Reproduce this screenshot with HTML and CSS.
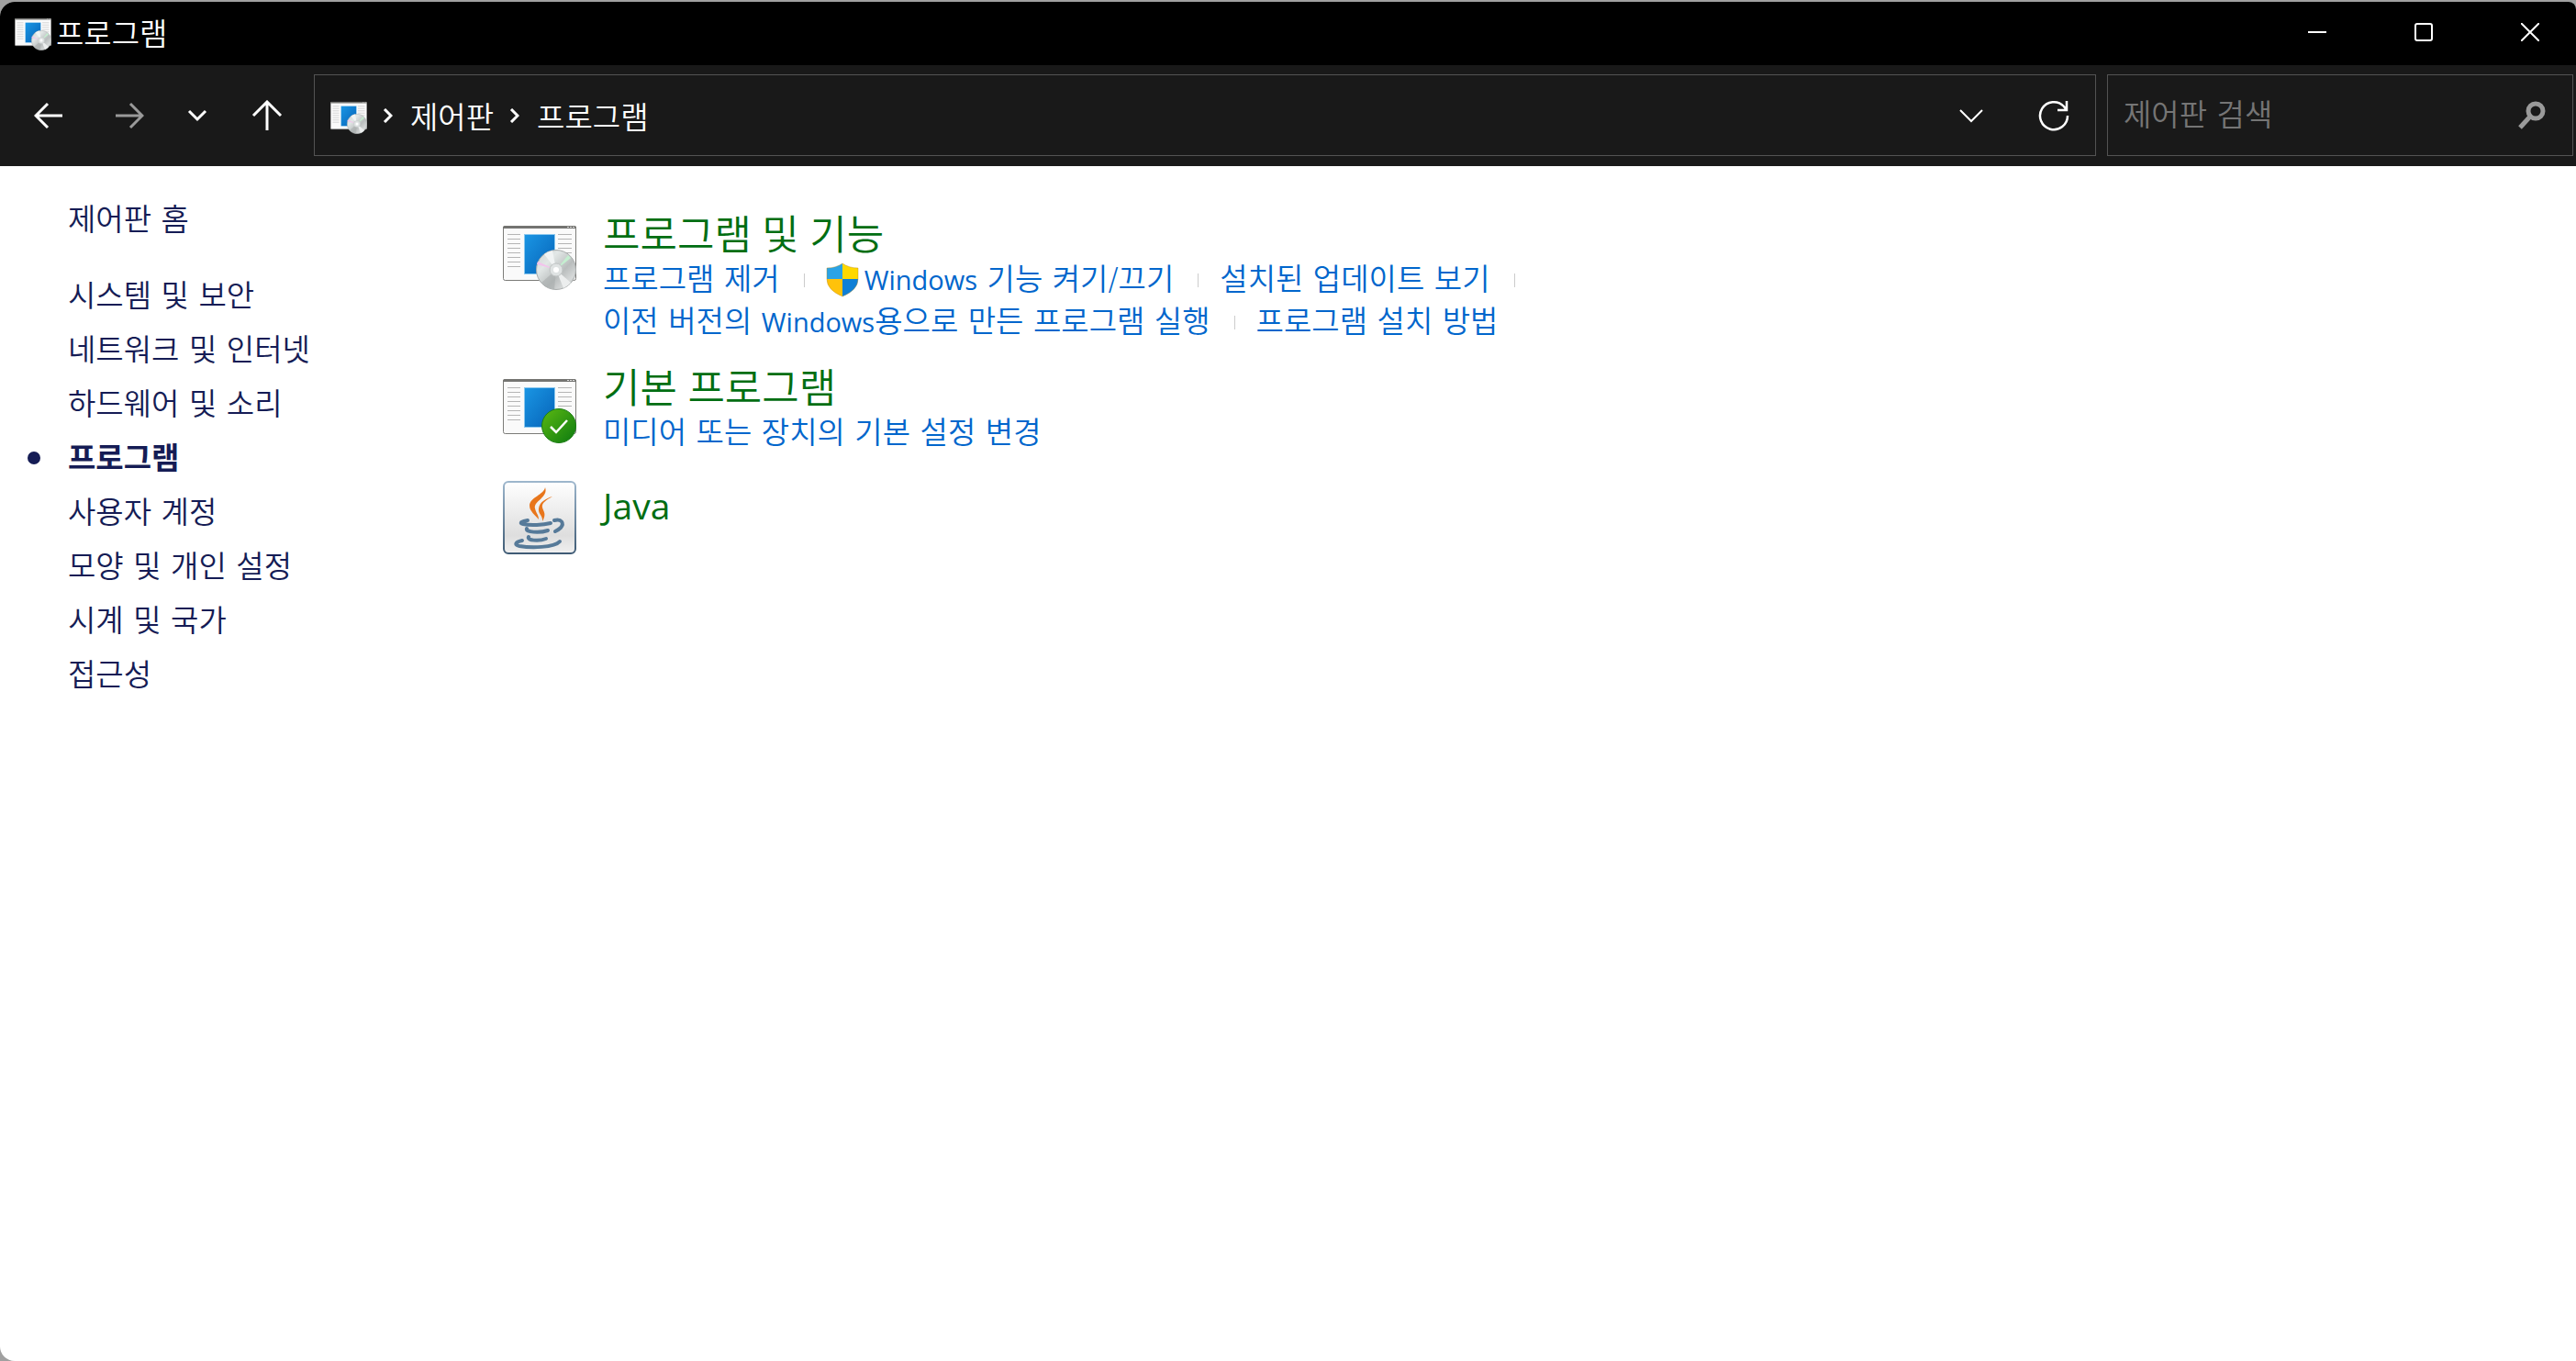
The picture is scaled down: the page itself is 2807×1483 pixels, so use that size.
FILE: index.html
```html
<!DOCTYPE html>
<html lang="ko">
<head>
  <meta charset="UTF-8">
  <meta name="viewport" content="width=device-width, initial-scale=1.0">
  <title>프로그램</title>
  <link rel="stylesheet" href="styles.css">
</head>
<body>
  <!-- shared icon parts -->
  <svg class="defs" width="0" height="0" aria-hidden="true">
    <defs>
      <linearGradient id="blue" x1="0" y1="0" x2="1" y2="1">
        <stop offset="0" stop-color="#1a96e4"/>
        <stop offset="1" stop-color="#0663b8"/>
      </linearGradient>
      <linearGradient id="green" x1="0" y1="0" x2="1" y2="1">
        <stop offset="0" stop-color="#5cb912"/>
        <stop offset="1" stop-color="#0c7a10"/>
      </linearGradient>
      <linearGradient id="silver" x1="0" y1="0" x2="1" y2="1">
        <stop offset="0" stop-color="#cfd4d4"/>
        <stop offset="0.3" stop-color="#e2e7e6"/>
        <stop offset="0.6" stop-color="#b9bdbd"/>
        <stop offset="0.8" stop-color="#d6d9d9"/>
        <stop offset="1" stop-color="#a4a8a8"/>
      </linearGradient>
      <linearGradient id="tile" x1="0" y1="0" x2="0" y2="1">
        <stop offset="0" stop-color="#ffffff"/>
        <stop offset="0.75" stop-color="#dedede"/>
        <stop offset="1" stop-color="#f0f0f0"/>
      </linearGradient>
      <linearGradient id="tile-edge" x1="0" y1="0" x2="0" y2="1">
        <stop offset="0" stop-color="#9db6cc"/>
        <stop offset="1" stop-color="#3f5b75"/>
      </linearGradient>
      <symbol id="window" viewBox="0 0 80 80">
        <rect x="0.5" y="10.5" width="79" height="59" rx="2" fill="#fafafa" stroke="#7b7b78"/>
        <path d="M0 13V12q0-2 2-2h76q2 0 2 2v1z" fill="#747471"/>
        <path d="M70 11.5h2m1 0h2m1 0h2" stroke="#ddd"/>
        <path d="M5 19.500h14M5 24.500h14M5 29.500h14M5 34.500h14M5 39.500h14M5 44.500h14M5 49.500h14M5 54.500h14M60 19.500h15M60 24.500h15M60 29.500h15M60 34.500h15M60 39.500h15" stroke="#b5b5b5"/>
        <rect x="23.500" y="19.500" width="33" height="43" fill="url(#blue)" stroke="#8cc8ee"/>
      </symbol>
      <symbol id="programs" viewBox="0 0 80 80">
        <use href="#window"/>
        <circle cx="58" cy="58" r="21.500" fill="url(#silver)" stroke="#a9adad"/>
        <path d="M58 58 45 41a21 21 0 0 1 9-4z" fill="#f1f4f4"/>
        <path d="M58 58 66 78a21 21 0 0 0 8-6z" fill="#eceeee"/>
        <path d="M58 58 42 72a21 21 0 0 0 14 7z" fill="#a9adad" opacity="0.6"/>
        <path d="M58 58 37 52l1-3z" fill="#f3c4ec"/>
        <path d="M58 58 71 42l3 3z" fill="#c4efd0"/>
        <circle cx="58" cy="58" r="7" fill="#dfe3e3" stroke="#c0c4c4"/>
        <circle cx="58" cy="58" r="3" fill="#fff"/>
      </symbol>
      <symbol id="defaults" viewBox="0 0 80 80">
        <use href="#window"/>
        <circle cx="61" cy="61" r="18.500" fill="url(#green)" stroke="#1c7d16"/>
        <path d="M52 62l6 6 12-13" fill="none" stroke="#fff" stroke-width="2.500"/>
      </symbol>
    </defs>
  </svg>

  <div class="window">
    <header class="title-bar">
      <svg class="small-icon"><use href="#programs"/></svg>
      <h1 class="window-title">프로그램</h1>
      <div class="window-controls">
        <button type="button" aria-label="최소화">
          <svg width="20" height="20" viewBox="0 0 20 20"><path d="M0 10h20" stroke-width="2"/></svg>
        </button>
        <button type="button" aria-label="최대화">
          <svg width="20" height="20" viewBox="0 0 20 20"><rect x="1" y="1" width="18" height="18" rx="2" stroke-width="2"/></svg>
        </button>
        <button type="button" aria-label="닫기">
          <svg width="20" height="20" viewBox="0 0 20 20"><path d="M0 0l20 20M20 0 0 20" stroke-width="2"/></svg>
        </button>
      </div>
    </header>

    <div class="toolbar">
      <nav class="history">
        <button type="button" aria-label="뒤로">
          <svg width="32" height="32" viewBox="0 0 32 32"><path d="M31 16H3M15 3 2 16l13 13" stroke-width="3"/></svg>
        </button>
        <button type="button" class="disabled" aria-label="앞으로" disabled>
          <svg width="32" height="32" viewBox="0 0 32 32"><path d="M1 16h28M17 3l13 13-13 13" stroke-width="3"/></svg>
        </button>
        <button type="button" class="recent" aria-label="최근 위치">
          <svg width="22" height="14" viewBox="0 0 22 14"><path d="M2 2l9 9 9-9" stroke-width="3"/></svg>
        </button>
        <button type="button" class="up" aria-label="위로">
          <svg width="34" height="34" viewBox="0 0 34 34"><path d="M17 33V2M2 17 17 2l15 15" stroke-width="3"/></svg>
        </button>
      </nav>

      <div class="address">
        <svg class="small-icon"><use href="#programs"/></svg>
        <svg class="crumb-arrow" width="12" height="16" viewBox="0 0 12 16"><path d="M3 1l7 7-7 7" stroke-width="3"/></svg>
        <a href="#">제어판</a>
        <svg class="crumb-arrow" width="12" height="16" viewBox="0 0 12 16"><path d="M3 1l7 7-7 7" stroke-width="3"/></svg>
        <a href="#">프로그램</a>
        <div class="address-buttons">
          <button type="button" aria-label="이전 위치">
            <svg width="28" height="16" viewBox="0 0 28 16"><path d="M2 2l12 12L26 2" stroke-width="2"/></svg>
          </button>
          <button type="button" aria-label="새로 고침">
            <svg width="34" height="34" viewBox="0 0 34 34"><path d="M32 17a15 15 0 1 1-4-10l3 4M31 1v10H21" stroke-width="2.500"/></svg>
          </button>
        </div>
      </div>

      <form class="search">
        <input type="search" placeholder="제어판 검색" aria-label="제어판 검색">
        <button type="button" aria-label="검색">
          <svg width="32" height="32" viewBox="0 0 32 32"><circle cx="20" cy="11" r="8" stroke-width="5"/><path d="M14 17 3 29" stroke-width="5"/></svg>
        </button>
      </form>
    </div>

    <div class="content">
      <nav class="sidebar">
        <a class="home" href="#">제어판 홈</a>
        <ul>
          <li><a href="#">시스템 및 보안</a></li>
          <li><a href="#">네트워크 및 인터넷</a></li>
          <li><a href="#">하드웨어 및 소리</a></li>
          <li class="current"><a href="#" aria-current="page">프로그램</a></li>
          <li><a href="#">사용자 계정</a></li>
          <li><a href="#">모양 및 개인 설정</a></li>
          <li><a href="#">시계 및 국가</a></li>
          <li><a href="#">접근성</a></li>
        </ul>
      </nav>

      <main class="categories">
        <section class="category">
          <svg class="category-icon"><use href="#programs"/></svg>
          <div>
            <h2><a href="#">프로그램 및 기능</a></h2>
            <div class="tasks">
              <a href="#">프로그램 제거</a>
              <span class="divider"></span>
              <a class="admin" href="#">
                <svg width="36" height="38" viewBox="0 0 36 38">
                  <path d="M18 1Q11 6 1 6v12h17z" fill="#2aa3e6"/>
                  <path d="M18 1q7 5 17 5v12H18z" fill="#ffd800"/>
                  <path d="M1 18h17v19Q1 30 1 18z" fill="#ffc20a"/>
                  <path d="M35 18H18v19q17-7 17-19z" fill="#0f7fd6"/>
                  <path d="M18 1Q11 6 1 6v12q0 12 17 19 17-7 17-19V6Q25 6 18 1z" fill="none" stroke="#b98a1c" stroke-opacity="0.4"/>
                </svg>
                <span><span class="latin">Windows</span> 기능 켜기/끄기</span>
              </a>
              <span class="divider"></span>
              <a href="#">설치된 업데이트 보기</a>
              <span class="divider"></span>
            </div>
            <div class="tasks">
              <a href="#">이전 버전의 <span class="latin">Windows</span>용으로 만든 프로그램 실행</a>
              <span class="divider"></span>
              <a href="#">프로그램 설치 방법</a>
            </div>
          </div>
        </section>

        <section class="category">
          <svg class="category-icon"><use href="#defaults"/></svg>
          <div>
            <h2><a href="#">기본 프로그램</a></h2>
            <div class="tasks">
              <a href="#">미디어 또는 장치의 기본 설정 변경</a>
            </div>
          </div>
        </section>

        <section class="category no-tasks">
          <svg class="category-icon" viewBox="0 0 80 80">
            <rect x="1" y="1" width="78" height="78" rx="5" fill="url(#tile)" stroke="url(#tile-edge)" stroke-width="2"/>
            <path d="M46 7c4 11-13 15-11 23 1 5 4 7 4 12-4-5-10-9-10-15 0-9 16-12 17-20z" fill="#e8761c"/>
            <path d="M54 17c-7 4-12 7-11 12 1 4 5 7 0 15 1-6-5-8-4-14 1-7 8-11 15-13z" fill="#e8761c"/>
            <g fill="none" stroke="#567a99" stroke-width="4" stroke-linecap="round">
              <path d="M27 43c-6 1-10 3-5 4 8 2 22 1 30-1"/>
              <path d="M56 43c8-2 11 3 7 8-2 2-4 3-6 4"/>
              <path d="M26 52c-2 4 14 5 23 2"/>
              <path d="M28 61c-2 4 11 5 19 2"/>
              <path d="M21 65c-9 2-8 5-3 6 12 2 38 2 44-5"/>
            </g>
          </svg>
          <div>
            <h2><a class="latin" href="#">Java</a></h2>
          </div>
        </section>
      </main>
    </div>
  </div>
</body>
</html>
```

FILE: styles.css
```css
* {
  box-sizing: border-box;
}
body {
  margin: 0;
  height: 100vh;
  padding-top: 2px;
  background: #a0a0a0;
  font-family: "DejaVu Sans", "Noto Sans CJK KR", sans-serif;
  font-size: 33px;
  font-weight: 350;
}
.defs {
  position: absolute;
}
a {
  color: inherit;
  text-decoration: none;
}
button {
  display: flex;
  align-items: center;
  justify-content: center;
  padding: 0;
  border: none;
  background: none;
  color: inherit;
}
button svg,
.crumb-arrow {
  fill: none;
  stroke: currentColor;
}
.window {
  display: flex;
  flex-direction: column;
  height: 100%;
  border-radius: 16px 8px 0 16px;
  overflow: hidden;
  background: #fff;
}
.small-icon {
  width: 40px;
  height: 40px;
  flex: none;
}
.latin {
  font-family: "Open Sans", sans-serif;
  font-weight: 400;
}

/* title bar */
.title-bar {
  display: flex;
  align-items: center;
  height: 69px;
  padding: 0 0 3px 16px;
  background: #000;
  color: #fff;
}
.window-title {
  margin: 0 0 0 5px;
  font-size: 33px;
  font-weight: 350;
}
.window-controls {
  display: flex;
  gap: 16px;
  height: 100%;
  margin-left: auto;
}
.window-controls button {
  width: 100px;
}

/* toolbar */
.toolbar {
  display: flex;
  height: 110px;
  padding: 10px 3px 11px 0;
  background: #191919;
  color: #fff;
}
.history {
  display: flex;
  width: 342px;
  padding-left: 12px;
}
.history button {
  width: 82px;
}
.history .disabled {
  width: 94px;
  color: #9a9a9a;
}
.history .recent {
  width: 54px;
}
.history .up {
  width: 98px;
}
.address {
  display: flex;
  align-items: center;
  flex: 1;
  padding-left: 17px;
  border: 1px solid #535353;
}
.crumb-arrow {
  margin: 0 19px 0 16px;
}
.address-buttons {
  display: flex;
  height: 100%;
  margin-left: auto;
}
.address-buttons button {
  width: 90px;
}
.search {
  display: flex;
  width: 508px;
  margin-left: 12px;
  border: 1px solid #535353;
}
.search input {
  flex: 1;
  min-width: 0;
  padding: 0 0 0 17px;
  border: none;
  outline: none;
  background: none;
  color: #fff;
  font: inherit;
}
.search input::placeholder {
  color: #757575;
}
.search button {
  width: 88px;
  color: #9a9a9a;
}

/* content */
.content {
  display: flex;
  flex: 1;
}
.sidebar {
  width: 548px;
  padding: 29px 0 0 74px;
  color: #151c55;
  line-height: 59px;
}
.sidebar ul {
  margin: 24px 0 0;
  padding: 0;
  list-style: none;
}
.sidebar .home {
  display: block;
}
.current {
  position: relative;
  font-weight: 700;
}
.current::before {
  content: "";
  position: absolute;
  left: -44px;
  top: 22px;
  width: 14px;
  height: 14px;
  border-radius: 50%;
  background: #151c55;
}
.categories {
  display: flex;
  flex-direction: column;
  gap: 25px;
  padding-top: 51px;
}
.category {
  display: flex;
  gap: 29px;
}
.category-icon {
  width: 80px;
  height: 80px;
  margin-top: 4px;
  flex: none;
}
.category h2 {
  margin: 0 0 2px;
  color: #006e12;
  font-family: "Open Sans", "Noto Sans CJK KR", sans-serif;
  font-size: 44px;
  font-weight: 350;
  line-height: 46px;
}
.category h2 .latin {
  font-size: 39px;
}
.category.no-tasks h2 {
  line-height: 58px;
}
.tasks {
  display: flex;
  align-items: center;
  height: 46px;
  color: #0066cc;
  line-height: 50px;
}
h2 + .tasks {
  margin-top: 4px;
}
.tasks .latin {
  font-size: 29px;
}
.admin {
  display: flex;
  align-items: center;
  gap: 6px;
}
.divider {
  width: 1px;
  height: 15px;
  margin: 0 23px 0 26px;
  background: #ccc;
}
```
